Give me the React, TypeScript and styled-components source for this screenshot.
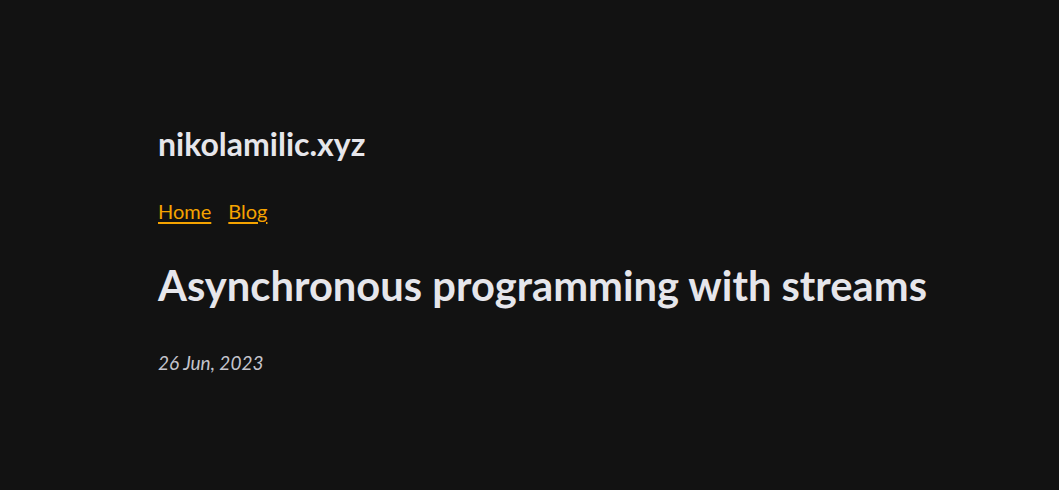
import React from "react";
import styled, { createGlobalStyle } from "styled-components";

const Global = createGlobalStyle`
  html, body { margin: 0; padding: 0; background: #121212; }
  body { font-family: "Lato", "Noto Sans", sans-serif; color: #e6e6eb; }
`;

const Page = styled.div`
  min-height: 490px;
  padding: 124px 0 0 158px;
  box-sizing: border-box;
`;

const SiteTitle = styled.div`
  font-size: 32px;
  font-weight: 700;
  line-height: 40px;
  color: #e6e6eb;
`;

const Nav = styled.nav`
  display: flex;
  gap: 17px;
  margin-top: 34px;
`;

const NavLink = styled.a`
  font-size: 20px;
  line-height: 26px;
  color: #f5a300;
  text-decoration: underline;
  text-underline-offset: 3px;
`;

const Title = styled.h1`
  margin: 36px 0 0;
  font-size: 41.7px;
  font-weight: 700;
  line-height: 50px;
  white-space: nowrap;
  color: #e6e6eb;
`;

const Date = styled.div`
  margin-top: 41px;
  font-size: 19px;
  font-style: italic;
  color: #c4c4cc;
`;

export default function App() {
  return (
    <>
      <Global />
      <Page>
        <SiteTitle>nikolamilic.xyz</SiteTitle>
        <Nav>
          <NavLink href="#">Home</NavLink>
          <NavLink href="#">Blog</NavLink>
        </Nav>
        <Title>Asynchronous programming with streams</Title>
        <Date>26 Jun, 2023</Date>
      </Page>
    </>
  );
}
